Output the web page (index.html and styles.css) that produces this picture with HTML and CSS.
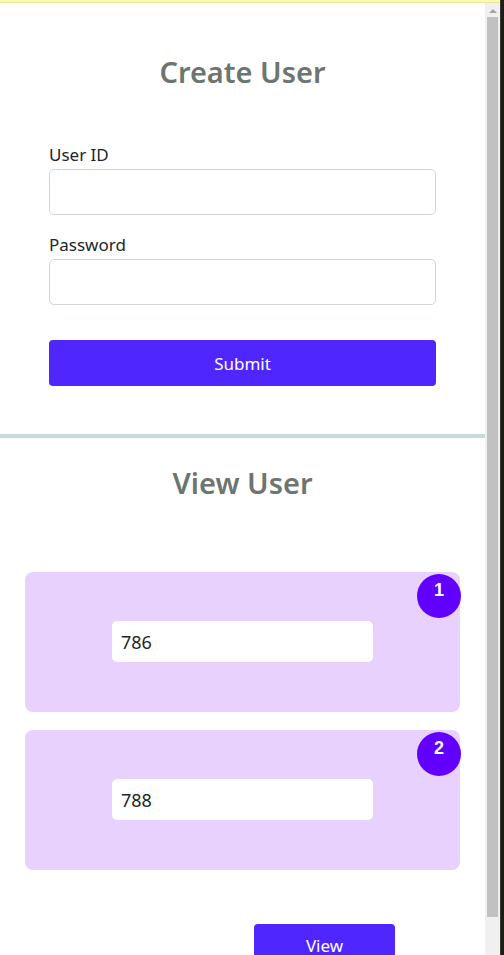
FILE: index.html
```html
<!DOCTYPE html>
<html>
<head>
<meta charset="utf-8">
<link rel="stylesheet" href="styles.css">
</head>
<body>
<div class="frame">
  <div class="main">
    <div class="topline"></div>
    <div class="viewport">
      <div class="page">
        <section class="create">
          <h1 class="title">Create User</h1>
          <form class="form">
            <label class="label">User ID</label>
            <input class="field" type="text">
            <label class="label label-gap">Password</label>
            <input class="field" type="password">
            <button type="button" class="btn btn-submit">Submit</button>
          </form>
        </section>
        <hr class="divider">
        <section class="view">
          <h1 class="title">View User</h1>
          <div class="cards">
            <div class="card">
              <span class="badge">1</span>
              <input class="card-field" type="text" value="786">
            </div>
            <div class="card">
              <span class="badge">2</span>
              <input class="card-field" type="text" value="788">
            </div>
          </div>
          <button type="button" class="btn btn-view">View</button>
        </section>
      </div>
      <div class="scrollbar">
        <div class="arrow"></div>
        <div class="thumb"></div>
      </div>
    </div>
  </div>
  <div class="dark"></div>
</div>
</body>
</html>
```
FILE: styles.css
```css
* { box-sizing: border-box; }
html, body { margin: 0; padding: 0; background: #fff; }
body { overflow: hidden; font-family: "Noto Sans", "Open Sans", sans-serif; }

.frame { display: flex; width: 504px; height: 955px; overflow: hidden; }
.main { width: 500px; display: flex; flex-direction: column; }
.topline { height: 3px; background: #fbfbb0; border-bottom: 1px solid #e6e6a0; flex: none; }
.viewport { flex: 1; display: flex; overflow: hidden; }
.page { width: 485px; flex: none; }
.dark { width: 4px; background: #1c1c1c; border-left: 1px solid #3a3a2a; }

.scrollbar { width: 15px; background: #f0f0f0; display: flex; flex-direction: column; align-items: center; }
.arrow { width: 0; height: 0; margin-top: 6px; border-left: 4px solid transparent; border-right: 4px solid transparent; border-bottom: 4px solid #a3a3a3; }
.thumb { width: 11px; height: 900px; margin-top: 4px; background: #c1c1c1; }

.title { margin: 0; text-align: center; font-size: 29px; line-height: 34px; font-weight: 600; color: #6c7570; }
.create { padding-top: 52px; }
.form { display: flex; flex-direction: column; padding: 0 49px; margin-top: 54px; }
.label { font-size: 17px; line-height: 24px; color: #212529; margin-bottom: 2px; }
.label-gap { margin-top: 18px; }
.field { height: 46px; border: 1px solid #ced4da; border-radius: 5px; background: #fff; font: inherit; }
.btn { border: none; background: #5026ff; color: #fff; font-family: inherit; font-size: 17px; border-radius: 4px; }
.btn-submit { height: 46px; margin-top: 35px; }

.divider { margin: 48px 0 0; border: none; height: 4px; background: #c5dbdb; }

.view { padding-top: 28px; }
.cards { display: flex; flex-direction: column; gap: 18px; padding: 0 25px; margin-top: 72px; }
.card { position: relative; height: 140px; background: #e8d1fc; border-radius: 8px; display: flex; justify-content: center; padding-top: 49px; }
.card-field { width: 261px; height: 41px; border: none; border-radius: 5px; background: #fff; padding: 0 9px; font-family: inherit; font-size: 18px; color: #212529; }
.badge { position: absolute; top: 2px; right: -1px; width: 44px; height: 44px; border-radius: 50%; background: #6200ff; color: #fff; font-family: "Liberation Sans", Arial, sans-serif; font-weight: bold; font-size: 18px; line-height: 18px; text-align: center; padding-top: 7px; }
.btn-view { display: block; width: 141px; height: 42px; margin: 54px 0 0 254px; }
```
